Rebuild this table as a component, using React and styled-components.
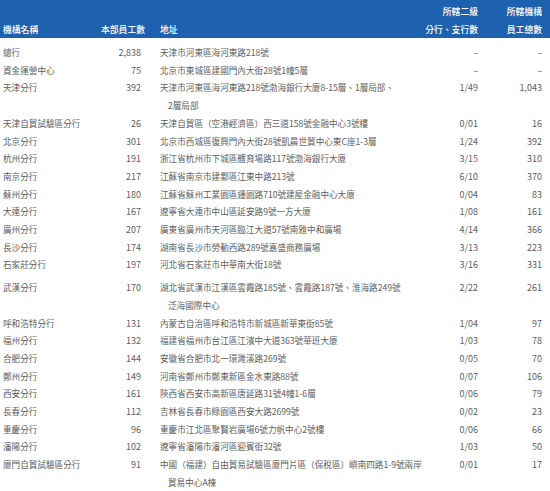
import React from 'react';
import styled, { createGlobalStyle } from 'styled-components';

const Global = createGlobalStyle`
  html, body { margin: 0; padding: 0; background: #ffffff; }
  body { font-family: "Noto Sans CJK TC", "Noto Sans", sans-serif; }
`;

const COLS = '98px 40px 250px 1fr 64px';

const Page = styled.div`
  width: 550px;
  height: 491px;
  overflow: hidden;
  background: #fff;
`;

const Header = styled.div`
  display: grid;
  grid-template-columns: ${COLS};
  align-items: end;
  box-sizing: border-box;
  height: 38px;
  padding: 3px 8px 0 3px;
  background: #1d61af;
  color: #ffffff;
  font-size: 8.8px;
  font-weight: 500;
  line-height: 18px;
`;

const HeadCell = styled.div`
  text-align: ${(p) => (p.$right ? 'right' : 'left')};
  padding-left: ${(p) => (p.$pad ? '19px' : '0')};
  white-space: nowrap;
`;

const Body = styled.div`
  padding: 6px 8px 0 3px;
`;

const Row = styled.div`
  display: grid;
  grid-template-columns: ${COLS};
  align-items: start;
  color: #606060;
  font-size: 8.6px;
  font-weight: 400;
  line-height: 17.7px;
  padding-top: ${(p) => p.$extra || 0}px;
`;

const Cell = styled.div`
  text-align: ${(p) => (p.$right ? 'right' : 'left')};
  white-space: nowrap;
  font-size: ${(p) => (p.$num ? '9px' : 'inherit')};
`;

const Address = styled.div`
  padding-left: 19px;
  white-space: nowrap;
`;

const Cont = styled.div`
  padding-left: 8px;
`;

const rows = [
  ['總行', '2,838', ['天津市河東區海河東路218號'], '–', '–'],
  ['資金運營中心', '75', ['北京市東城區建國門內大街28號1幢5層'], '–', '–'],
  ['天津分行', '392', ['天津市河東區海河東路218號渤海銀行大廈8-15層、1層局部、', '2層局部'], '1/49', '1,043'],
  ['天津自貿試驗區分行', '26', ['天津自貿區（空港經濟區）西三道158號金融中心3號樓'], '0/01', '16'],
  ['北京分行', '301', ['北京市西城區復興門內大街28號凱晨世貿中心東C座1-3層'], '1/24', '392'],
  ['杭州分行', '191', ['浙江省杭州市下城區體育場路117號渤海銀行大廈'], '3/15', '310'],
  ['南京分行', '217', ['江蘇省南京市建鄴區江東中路213號'], '6/10', '370'],
  ['蘇州分行', '180', ['江蘇省蘇州工業園區鍾園路710號建屋金融中心大廈'], '0/04', '83'],
  ['大連分行', '167', ['遼寧省大連市中山區延安路9號一方大廈'], '1/08', '161'],
  ['廣州分行', '207', ['廣東省廣州市天河區臨江大道57號南雅中和廣場'], '4/14', '366'],
  ['長沙分行', '174', ['湖南省長沙市勞動西路289號嘉盛商務廣場'], '3/13', '223'],
  ['石家莊分行', '197', ['河北省石家莊市中華南大街18號'], '3/16', '331'],
  ['武漢分行', '170', ['湖北省武漢市江漢區雲霞路185號、雲霞路187號、淮海路249號', '泛海國際中心'], '2/22', '261', 5],
  ['呼和浩特分行', '131', ['內蒙古自治區呼和浩特市新城區新華東街85號'], '1/04', '97'],
  ['福州分行', '132', ['福建省福州市台江區江濱中大道363號華班大廈'], '1/03', '78'],
  ['合肥分行', '144', ['安徽省合肥市北一環濉溪路269號'], '0/05', '70'],
  ['鄭州分行', '149', ['河南省鄭州市鄭東新區金水東路88號'], '0/07', '106'],
  ['西安分行', '161', ['陝西省西安市高新區唐延路31號4幢1-6層'], '0/06', '79'],
  ['長春分行', '112', ['吉林省長春市綠園區西安大路2699號'], '0/02', '23'],
  ['重慶分行', '96', ['重慶市江北區聚賢岩廣場6號力帆中心2號樓'], '0/06', '66'],
  ['瀋陽分行', '102', ['遼寧省瀋陽市瀋河區迎賓街32號'], '1/03', '50'],
  ['廈門自貿試驗區分行', '91', ['中國（福建）自由貿易試驗區廈門片區（保稅區）嶼南四路1-9號兩岸', '貿易中心A棟'], '0/01', '17'],
];

export default function App() {
  return (
    <Page>
      <Global />
      <Header>
        <HeadCell>機構名稱</HeadCell>
        <HeadCell $right>本部員工數</HeadCell>
        <HeadCell $pad>地址</HeadCell>
        <HeadCell $right>所轄二級<br />分行、支行數</HeadCell>
        <HeadCell $right>所轄機構<br />員工總數</HeadCell>
      </Header>
      <Body>
        {rows.map(([name, staff, addr, br, total, extra]) => (
          <Row key={name} $extra={extra}>
            <Cell>{name}</Cell>
            <Cell $right $num>{staff}</Cell>
            <Address>
              {addr.map((line, i) =>
                i === 0 ? <div key={i}>{line}</div> : <Cont key={i}>{line}</Cont>
              )}
            </Address>
            <Cell $right $num>{br}</Cell>
            <Cell $right $num>{total}</Cell>
          </Row>
        ))}
      </Body>
    </Page>
  );
}
